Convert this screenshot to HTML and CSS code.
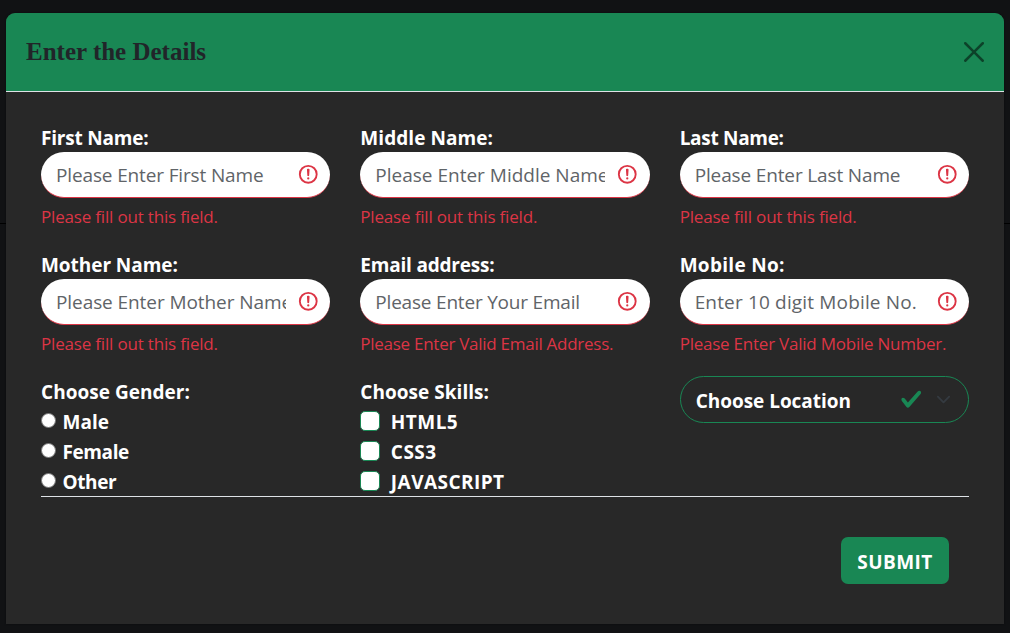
FILE: index.html
```html
<!DOCTYPE html>
<html lang="en">
<head>
<meta charset="utf-8">
<title>Enter the Details</title>
<link rel="stylesheet" href="styles.css">
</head>
<body>
<svg class="sprite" width="0" height="0" aria-hidden="true">
  <symbol id="alert" viewBox="0 0 12 12"><g fill="none" stroke="#dc3545"><circle cx="6" cy="6" r="4.5"/><path stroke-linejoin="round" d="M5.8 3.6h.4L6 6.5z"/></g><circle cx="6" cy="8.2" r=".6" fill="#dc3545"/></symbol>
</svg>
<div class="modal">
  <header class="modal-header">
    <h1 class="title">Enter the Details</h1>
    <svg class="close" viewBox="0 0 16 16"><path d="M.293.293a1 1 0 0 1 1.414 0L8 6.586 14.293.293a1 1 0 1 1 1.414 1.414L9.414 8l6.293 6.293a1 1 0 0 1-1.414 1.414L8 9.414l-6.293 6.293a1 1 0 0 1-1.414-1.414L6.586 8 .293 1.707a1 1 0 0 1 0-1.414z"/></svg>
  </header>
  <form class="modal-body">
    <div class="grid">
      <div class="cell">
        <label class="label t-first">First Name:</label>
        <div class="field"><input class="input p-first" placeholder="Please Enter First Name"><svg class="alert"><use href="#alert"/></svg></div>
        <p class="feedback">Please fill out this field.</p>
      </div>
      <div class="cell">
        <label class="label t-middle">Middle Name:</label>
        <div class="field"><input class="input p-middle" placeholder="Please Enter Middle Name"><svg class="alert"><use href="#alert"/></svg></div>
        <p class="feedback">Please fill out this field.</p>
      </div>
      <div class="cell">
        <label class="label t-last">Last Name:</label>
        <div class="field"><input class="input p-last" placeholder="Please Enter Last Name"><svg class="alert"><use href="#alert"/></svg></div>
        <p class="feedback">Please fill out this field.</p>
      </div>
      <div class="cell">
        <label class="label t-mother">Mother Name:</label>
        <div class="field"><input class="input p-mother" placeholder="Please Enter Mother Name"><svg class="alert"><use href="#alert"/></svg></div>
        <p class="feedback">Please fill out this field.</p>
      </div>
      <div class="cell">
        <label class="label t-email">Email address:</label>
        <div class="field"><input class="input p-email" placeholder="Please Enter Your Email"><svg class="alert"><use href="#alert"/></svg></div>
        <p class="feedback f-email">Please Enter Valid Email Address.</p>
      </div>
      <div class="cell">
        <label class="label t-mobile">Mobile No:</label>
        <div class="field"><input class="input p-mobile" placeholder="Enter 10 digit Mobile No."><svg class="alert"><use href="#alert"/></svg></div>
        <p class="feedback f-mobile">Please Enter Valid Mobile Number.</p>
      </div>
      <div class="cell choices">
        <div class="label t-group">Choose Gender:</div>
        <label class="choice t-male"><span class="radio"></span>Male</label>
        <label class="choice"><span class="radio"></span>Female</label>
        <label class="choice"><span class="radio"></span>Other</label>
      </div>
      <div class="cell choices">
        <div class="label t-group">Choose Skills:</div>
        <label class="choice t-skill"><span class="check"></span>HTML5</label>
        <label class="choice t-skill"><span class="check"></span>CSS3</label>
        <label class="choice t-skill"><span class="check"></span>JAVASCRIPT</label>
      </div>
      <div class="cell choices">
        <div class="select"><span class="select-text">Choose Location</span>
          <svg class="tick" viewBox="0 0 8 8"><path fill="#198754" d="M2.3 6.73.6 4.53c-.4-1.04.46-1.4 1.1-.8l1.1 1.4 3.4-3.8c.6-.63 1.6-.27 1.2.7l-4 4.6c-.43.5-.8.4-1.1.1z"/></svg>
          <svg class="chevron" viewBox="0 0 16 16"><path fill="none" stroke="#343a40" stroke-linecap="round" stroke-linejoin="round" stroke-width="2" d="m2 5 6 6 6-6"/></svg>
        </div>
      </div>
    </div>
    <div class="footer"><button type="button" class="submit">SUBMIT</button></div>
  </form>
</div>
</body>
</html>
```
FILE: styles.css
```css
* { box-sizing: border-box; }
body {
  margin: 0;
  height: 633px;
  overflow: hidden;
  padding: 13px 6px 9px;
  background: linear-gradient(#000, #000) 0 223px / 100% 1px no-repeat #111214;
  color: #fff;
  font: 19px/30px "Open Sans", "Noto Sans", sans-serif;
}
.sprite { display: block; width: 0; height: 0; }
.modal {
  height: 611px;
  background: #282828;
  border-radius: 9px 9px 0 0;
  overflow: hidden;
  box-shadow: 0 0 2px rgba(0, 0, 0, .5);
}
.modal-header {
  height: 79px;
  display: flex;
  align-items: center;
  justify-content: space-between;
  padding: 0 20px;
  background: #198754;
  border-bottom: 1px solid #dee2e6;
}
.title {
  margin: 0;
  color: #212529;
  font: bold 25px/30px "Liberation Serif", serif;
}
.close { width: 20px; height: 20px; opacity: .5; }
.modal-body { padding: 30px 35px 0; }
.grid {
  display: grid;
  grid-template-columns: repeat(3, 1fr);
  grid-template-rows: 127px 127px 120px;
  column-gap: 30px;
  border-bottom: 1px solid #dee2e6;
}
.cell { min-width: 0; }
.label { display: block; height: 30px; line-height: 33px; font-weight: 700; white-space: nowrap; }
.t-first { letter-spacing: -.2px; }
.t-middle { letter-spacing: .05px; }
.t-last { letter-spacing: -.3px; }
.t-mother { letter-spacing: -.05px; }
.t-email { letter-spacing: -.2px; }
.t-mobile { letter-spacing: .3px; }
.t-group { letter-spacing: .03px; }
.field {
  height: 46px;
  display: flex;
  align-items: center;
  background: #fff;
  border-bottom: 1px solid #dc3545;
  border-radius: 23px;
  padding: 0 10.8px 0 15px;
}
.input {
  flex: 1;
  min-width: 0;
  height: 44px;
  padding: 0;
  border: 0;
  outline: 0;
  background: transparent;
  font: inherit;
}
.input::placeholder { color: #5f6468; opacity: 1; }
.p-first, .p-last { letter-spacing: -.14px; }
.p-mother { letter-spacing: -.08px; }
.p-email { letter-spacing: -.2px; }
.p-mobile { letter-spacing: .16px; }
.alert { flex: none; width: 22.5px; height: 22.5px; margin-left: 11.2px; }
.feedback { margin: 5px 0 0; color: #dc3545; font-size: 17px; line-height: 28px; letter-spacing: -.18px; white-space: nowrap; }
.f-email { letter-spacing: -.27px; }
.f-mobile { letter-spacing: -.23px; }
.choices { font-weight: 700; letter-spacing: -.4px; }
.choice { display: flex; align-items: center; height: 30px; line-height: 30px; padding-top: 2px; }
.t-male { letter-spacing: 0; }
.t-skill { letter-spacing: .45px; }
.radio { width: 15px; height: 15px; margin: -3px 6.5px 0 0; border: 1px solid #767676; border-radius: 50%; background: #fff; }
.check { width: 20px; height: 20px; margin: -2px 10.5px 0 0; border: 1px solid #198754; border-radius: 5px; background: #fff; }
.select {
  height: 47px;
  display: flex;
  align-items: center;
  border: 1px solid #198754;
  border-radius: 24px;
  padding: 0 17.5px 0 15px;
}
.select-text { flex: 1; padding-top: 3px; letter-spacing: -.03px; }
.tick { width: 22.5px; height: 22.5px; }
.chevron { width: 15px; height: 15px; margin-left: 13px; }
.footer { display: flex; justify-content: flex-end; padding: 40px 20px 0; }
.submit {
  width: 108px;
  height: 47px;
  padding: 3px 0 0;
  border: 0;
  border-radius: 7px;
  background: #198754;
  color: #fff;
  font: 700 19px/30px "Open Sans", "Noto Sans", sans-serif;
  letter-spacing: .45px;
}
```
